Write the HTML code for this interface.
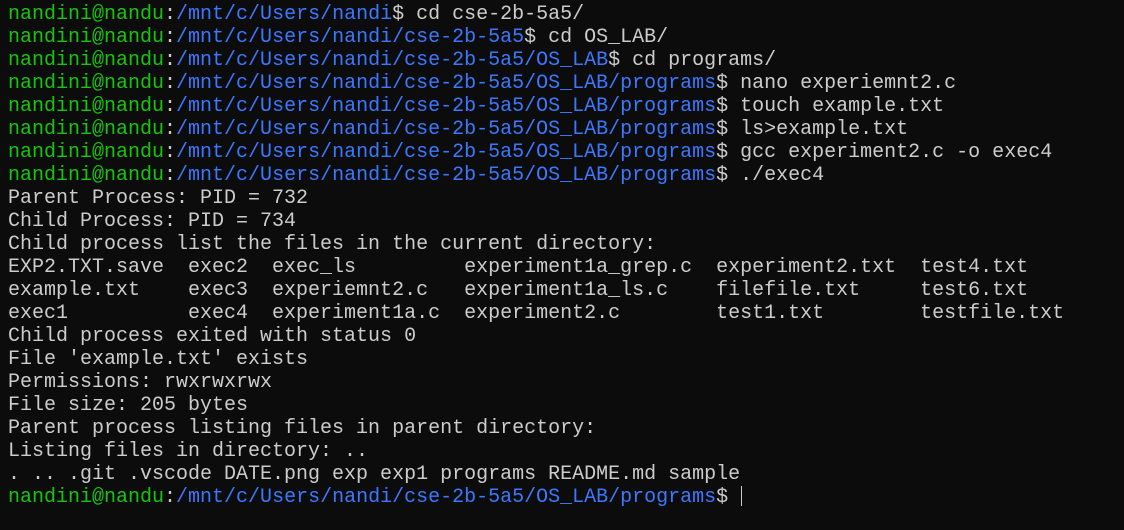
<!DOCTYPE html>
<html><head><style>
html,body{margin:0;background:#0c0c0c;width:1124px;height:530px;overflow:hidden}
pre{margin:0;padding:3px 0 0 8px;font-family:"Liberation Mono","DejaVu Sans Mono",monospace;font-size:20px;line-height:23px;color:#cccccc;font-weight:500}
.g{color:#16c60c}.b{color:#3b78ff}
.c{display:inline-block;width:1px;height:20px;background:#ccc;vertical-align:-4px;margin-left:1px}
</style></head><body><pre><span class="g">nandini@nandu</span>:<span class="b">/mnt/c/Users/nandi</span>$ cd cse-2b-5a5/
<span class="g">nandini@nandu</span>:<span class="b">/mnt/c/Users/nandi/cse-2b-5a5</span>$ cd OS_LAB/
<span class="g">nandini@nandu</span>:<span class="b">/mnt/c/Users/nandi/cse-2b-5a5/OS_LAB</span>$ cd programs/
<span class="g">nandini@nandu</span>:<span class="b">/mnt/c/Users/nandi/cse-2b-5a5/OS_LAB/programs</span>$ nano experiemnt2.c
<span class="g">nandini@nandu</span>:<span class="b">/mnt/c/Users/nandi/cse-2b-5a5/OS_LAB/programs</span>$ touch example.txt
<span class="g">nandini@nandu</span>:<span class="b">/mnt/c/Users/nandi/cse-2b-5a5/OS_LAB/programs</span>$ ls>example.txt
<span class="g">nandini@nandu</span>:<span class="b">/mnt/c/Users/nandi/cse-2b-5a5/OS_LAB/programs</span>$ gcc experiment2.c -o exec4
<span class="g">nandini@nandu</span>:<span class="b">/mnt/c/Users/nandi/cse-2b-5a5/OS_LAB/programs</span>$ ./exec4
Parent Process: PID = 732
Child Process: PID = 734
Child process list the files in the current directory:
EXP2.TXT.save  exec2  exec_ls         experiment1a_grep.c  experiment2.txt  test4.txt
example.txt    exec3  experiemnt2.c   experiment1a_ls.c    filefile.txt     test6.txt
exec1          exec4  experiment1a.c  experiment2.c        test1.txt        testfile.txt
Child process exited with status 0
File 'example.txt' exists
Permissions: rwxrwxrwx
File size: 205 bytes
Parent process listing files in parent directory:
Listing files in directory: ..
. .. .git .vscode DATE.png exp exp1 programs README.md sample
<span class="g">nandini@nandu</span>:<span class="b">/mnt/c/Users/nandi/cse-2b-5a5/OS_LAB/programs</span>$ <span class="c"></span></pre></body></html>
